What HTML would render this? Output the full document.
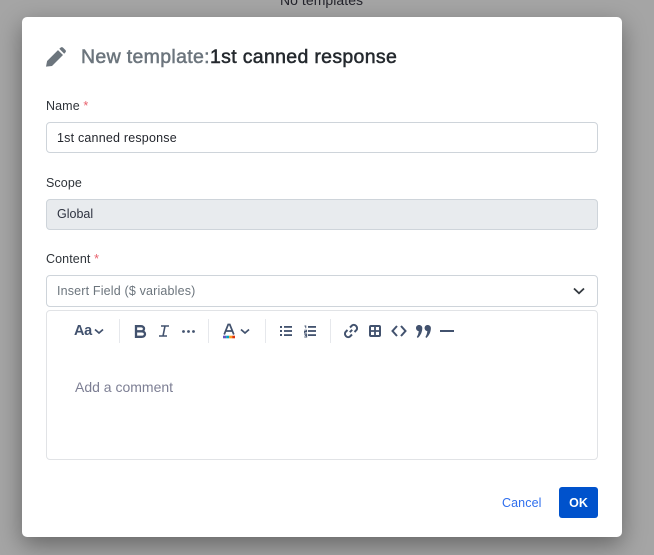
<!DOCTYPE html>
<html><head><meta charset="utf-8"><style>
*{box-sizing:border-box}
html,body{margin:0;padding:0}
body{width:654px;height:555px;overflow:hidden;position:relative;background:#a5a5a5;font-family:"Liberation Sans",sans-serif;color:#212529}
.a{position:absolute;white-space:nowrap}
.m{position:absolute;left:22px;top:17px;width:600px;height:520px;background:#fff;border-radius:5px;box-shadow:0 8px 24px rgba(0,0,0,.38)}
.l{font-size:12.5px;line-height:16px;color:#2f343a;left:46px;letter-spacing:.1px}
.s{color:#e8606c}
.b{position:absolute;left:46px;width:552px;border:1px solid #ced4da;border-radius:4px;background:#fff}
.t{font-size:12.5px;line-height:16px;left:57px}
.d{position:absolute;top:319px;width:1px;height:24px;background:#e6e8ec}
svg{position:absolute;overflow:visible}
</style></head><body>
<div class="a" style="left:280px;top:-8px;font-size:14px;line-height:16px;color:#24242c;letter-spacing:.05px">No templates</div>
<div class="m"></div>
<svg style="left:46px;top:47px" width="20" height="20" viewBox="0 0 20 20"><path fill="#6c757d" d="M0 19.600 1.100 14 12 3.100 17 8 6 19 Z M13.300 1.800 14.600.6c.7-.7 1.700-.7 2.400 0l2.400 2.400c.7.7.7 1.700 0 2.400L18.200 6.700Z"/></svg>
<div class="a" style="left:81px;top:46px;font-size:19.5px;line-height:22px;font-weight:normal;-webkit-text-stroke:.5px #6c757d;color:#6c757d;letter-spacing:.33px">New template:</div>
<div class="a" style="left:210px;top:46px;font-size:19.5px;line-height:22px;font-weight:normal;-webkit-text-stroke:.5px #24292e;color:#24292e;letter-spacing:.32px">1st canned response</div>

<div class="a l" style="top:98px">Name <span class="s">*</span></div>
<div class="b" style="top:122px;height:31px"></div>
<div class="a t" style="top:130px;color:#24272e;letter-spacing:.2px">1st canned response</div>

<div class="a l" style="top:175px">Scope</div>
<div class="b" style="top:199px;height:31px;background:#e8ebee"></div>
<div class="a t" style="top:206px;color:#2e3340">Global</div>

<div class="a l" style="top:251px">Content <span class="s">*</span></div>
<div class="b" style="top:275px;height:32px"></div>
<div class="a t" style="top:283px;color:#6c757d;letter-spacing:.17px">Insert Field ($ variables)</div>
<svg style="left:573px;top:287px" width="12" height="8" viewBox="0 0 12 8"><path d="M1 1.500 6 6.300 11 1.500" fill="none" stroke="#343a40" stroke-width="1.800"/></svg>

<div class="b" style="top:310px;height:150px;border-color:#e1e3e6"></div>

<div class="a" style="left:74px;top:323px;font-size:14.5px;line-height:17px;font-weight:bold;color:#42526e;letter-spacing:-.3px">Aa</div>
<svg style="left:94px;top:328px" width="10" height="7" viewBox="0 0 10 7"><path d="M1 1.500 5 5 9 1.500" fill="none" stroke="#42526e" stroke-width="1.700"/></svg>
<div class="d" style="left:119px"></div>
<svg style="left:134px;top:325px" width="12" height="13" viewBox="0 0 12 13"><path d="M2 1.200H7C9 1.200 10 2.300 10 3.700S9 6.300 7 6.300H2ZM2 6.300H7.500C9.800 6.300 11 7.500 11 9.100S9.800 11.800 7.500 11.800H2Z" fill="none" stroke="#42526e" stroke-width="2.300"/></svg>
<svg style="left:158px;top:325px" width="12" height="12" viewBox="0 0 12 12"><path d="M3 1H11M1 11H9M7 1 5 11" fill="none" stroke="#42526e" stroke-width="1.600"/></svg>
<svg style="left:182px;top:330px" width="13" height="3" viewBox="0 0 13 3"><circle cx="1.500" cy="1.500" r="1.400" fill="#42526e"/><circle cx="6.500" cy="1.500" r="1.400" fill="#42526e"/><circle cx="11.500" cy="1.500" r="1.400" fill="#42526e"/></svg>
<div class="d" style="left:208px"></div>
<svg style="left:223px;top:323px" width="12" height="16" viewBox="0 0 12 16"><path d="M1.200 11.500 5.200 1.500H6.800L10.800 11.500M3 8H9" fill="none" stroke="#42526e" stroke-width="1.700"/><rect x="0" y="12.700" width="3.200" height="2.600" fill="#6554c0"/><rect x="3.200" y="12.700" width="3" height="2.600" fill="#00a3bf"/><rect x="6.200" y="12.700" width="3" height="2.600" fill="#ff991f"/><rect x="9.200" y="12.700" width="2.800" height="2.600" fill="#de350b"/></svg>
<svg style="left:240px;top:328px" width="10" height="7" viewBox="0 0 10 7"><path d="M1 1.500 5 5 9 1.500" fill="none" stroke="#42526e" stroke-width="1.700"/></svg>
<div class="d" style="left:265px"></div>
<svg style="left:280px;top:325px" width="12" height="12" viewBox="0 0 12 12" fill="#42526e"><rect x="0" y="1" width="2" height="2"/><rect x="0" y="5" width="2" height="2"/><rect x="0" y="9" width="2" height="2"/><rect x="4" y="1" width="8" height="1.800"/><rect x="4" y="5.100" width="8" height="1.800"/><rect x="4" y="9.200" width="8" height="1.800"/></svg>
<svg style="left:304px;top:325px" width="12" height="12" viewBox="0 0 12 12"><path d="M.5 1H1.800V3.200M.3 5.200H2.600V6.500H.5V8H2.800M.3 9.300H2.700V12H.3M.8 10.600H2.500" fill="none" stroke="#42526e" stroke-width=".9"/><g fill="#42526e"><rect x="4" y="1" width="8" height="1.800"/><rect x="4" y="5.100" width="8" height="1.800"/><rect x="4" y="9.200" width="8" height="1.800"/></g></svg>
<div class="d" style="left:330px"></div>
<svg style="left:344px;top:324px" width="14" height="14" viewBox="0 0 14 14"><path d="M5.800 8.200 8.200 5.800M6 3.500 8 1.500C9 .6 10.800.6 12 1.800S13.400 4.900 12.500 6L10.500 8M8 10.500 6 12.500C5 13.400 3.200 13.400 2 12.200S.6 9.100 1.500 8L3.500 6" fill="none" stroke="#42526e" stroke-width="2"/></svg>
<svg style="left:369px;top:325px" width="12" height="12" viewBox="0 0 12 12"><rect x="1" y="1" width="10" height="10" rx="1" fill="none" stroke="#42526e" stroke-width="2"/><path d="M6 1V11M1 6H11" stroke="#42526e" stroke-width="1.800"/></svg>
<svg style="left:391px;top:325px" width="16" height="12" viewBox="0 0 16 12"><path d="M6 1 1.500 6 6 11M10 1 14.500 6 10 11" fill="none" stroke="#42526e" stroke-width="2"/></svg>
<svg style="left:416px;top:325px" width="15" height="13" viewBox="0 0 15 13" fill="#42526e"><path d="M3 0C4.800 0 6.300 1.300 6.300 3 6.300 7 4.500 10.500 1.800 13L.8 12C1.800 10.500 2.500 8.500 2.700 6.100 1.100 5.900 0 4.600 0 3 0 1.300 1.300 0 3 0ZM11.600 0C13.400 0 14.900 1.300 14.900 3 14.900 7 13.100 10.500 10.400 13L9.400 12C10.400 10.500 11.100 8.500 11.300 6.100 9.700 5.900 8.600 4.600 8.600 3 8.600 1.300 9.900 0 11.600 0Z"/></svg>
<svg style="left:440px;top:330px" width="14" height="2" viewBox="0 0 14 2"><rect width="14" height="2" fill="#42526e"/></svg>

<div class="a" style="left:75px;top:379px;font-size:14px;line-height:17px;color:#7d7f94">Add a comment</div>

<div class="a" style="left:502px;top:495px;font-size:12.500px;line-height:16px;color:#2f6fed;letter-spacing:.1px">Cancel</div>
<div class="a" style="left:559px;top:487px;width:39px;height:31px;background:#0052cc;border-radius:3px;color:#fff;font-size:12.500px;font-weight:bold;line-height:32px;text-align:center">OK</div>
</body></html>
